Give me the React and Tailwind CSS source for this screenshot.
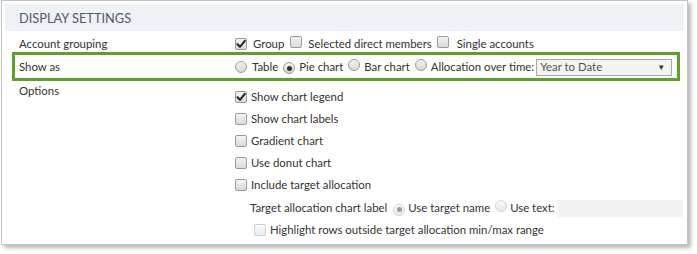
import React from "react";

function Check({ checked = false, disabled = false }) {
  return (
    <span
      className={
        "inline-flex items-center justify-center w-[12px] h-[12px] rounded-[2px] border shrink-0 " +
        (disabled
          ? "border-[#cfcfcf] bg-gradient-to-b from-[#fafafa] to-[#ececec]"
          : "border-[#9a9a9a] bg-gradient-to-b from-[#f4f4f4] to-[#d9d9d9]")
      }
    >
      {checked && (
        <svg width="10" height="10" viewBox="0 0 10 10">
          <path d="M1.5 5.2 L4 7.8 L8.8 1.8" fill="none" stroke="#222" strokeWidth="2" strokeLinecap="round" strokeLinejoin="round" />
        </svg>
      )}
    </span>
  );
}

function Radio({ checked = false, disabled = false }) {
  return (
    <span
      className={
        "inline-flex items-center justify-center w-[12px] h-[12px] rounded-full border shrink-0 " +
        (disabled
          ? "border-[#d4d4d4] bg-gradient-to-b from-[#fafafa] to-[#e6e6e6]"
          : "border-[#9a9a9a] bg-gradient-to-b from-[#f4f4f4] to-[#d6d6d6]")
      }
    >
      {checked && (
        <span className={"w-[5px] h-[5px] rounded-full " + (disabled ? "bg-[#9a9a9a]" : "bg-[#333]")} />
      )}
    </span>
  );
}

export default function App() {
  return (
    <div
      className="w-[697px] h-[254px] bg-white text-[11.4px] text-[#333] whitespace-nowrap"
      style={{ fontFamily: 'Lato, "Open Sans", sans-serif' }}
    >
      <div className="ml-[1px] w-[687px] h-[245px] border border-[#c4c4c4] bg-white p-[3px] shadow-[3px_3px_4px_rgba(0,0,0,0.28)]">
        {/* Header */}
        <div className="h-[27px] bg-[#eef2f6] flex items-center pl-[14px] pt-[2px] text-[12.8px] text-[#4f5a66]">
          DISPLAY SETTINGS
        </div>

        {/* Account grouping */}
        <div className="h-[21px] flex items-center pt-[5px]">
          <div className="w-[230px] shrink-0 pl-[14px]">Account grouping</div>
          <div className="flex items-center">
            <Check checked />
            <span className="ml-[6px]">Group</span>
            <span className="ml-[6px]"><Check /></span>
            <span className="ml-[6px]">Selected direct members</span>
            <span className="ml-[5px]"><Check /></span>
            <span className="ml-[8px]">Single accounts</span>
          </div>
        </div>

        {/* Show as (highlighted) */}
        <div className="ml-[7px] w-[668px] h-[29px] border-[3px] border-[#5f9f2b] flex items-center">
          <div className="w-[220px] shrink-0 pl-[4px]">Show as</div>
          <div className="flex items-center">
            <Radio />
            <span className="ml-[5px]">Table</span>
            <span className="ml-[5px]"><Radio checked /></span>
            <span className="ml-[4px]">Pie chart</span>
            <span className="ml-[5px]"><Radio /></span>
            <span className="ml-[4px]">Bar chart</span>
            <span className="ml-[5px]"><Radio /></span>
            <span className="ml-[4px]">Allocation over time:</span>
            <div className="ml-[2px] mt-[1px] w-[136px] h-[17px] border border-[#a8a8a8] bg-[#f4f4f4] flex items-center justify-between pl-[3px] pr-[6px] text-[#555]">
              <span>Year to Date</span>
              <span className="text-[8px] text-[#333]">▼</span>
            </div>
          </div>
        </div>

        {/* Options */}
        <div className="flex mt-[1px]">
          <div className="w-[230px] shrink-0 pl-[14px] pt-[1px] leading-[16px]">Options</div>
          <div className="flex flex-col pt-[4px]">
            {[
              ["Show chart legend", true],
              ["Show chart labels", false],
              ["Gradient chart", false],
              ["Use donut chart", false],
              ["Include target allocation", false],
            ].map(([label, c]) => (
              <div key={label} className="h-[22px] flex items-center">
                <Check checked={c} />
                <span className="ml-[4px]">{label}</span>
              </div>
            ))}
            <div className="h-[23px] flex items-center pl-[15px] pt-[1px]">
              <span>Target allocation chart label</span>
              <span className="ml-[6px]"><Radio checked disabled /></span>
              <span className="ml-[3px]">Use target name</span>
              <span className="ml-[5px]"><Radio disabled /></span>
              <span className="ml-[3px]">Use text:</span>
              <div className="ml-[2px] w-[126px] h-[17px] bg-[#f2f2f2]" />
            </div>
            <div className="h-[22px] flex items-center pl-[19px]">
              <Check disabled />
              <span className="ml-[4px]">Highlight rows outside target allocation min/max range</span>
            </div>
          </div>
        </div>
      </div>
    </div>
  );
}
